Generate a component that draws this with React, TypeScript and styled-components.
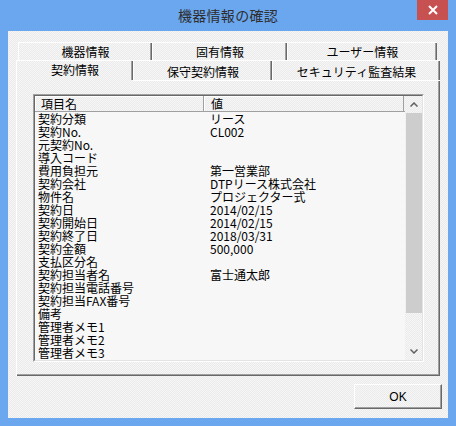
import styled, { createGlobalStyle, css } from "styled-components";

const GlobalStyle = createGlobalStyle`
  html, body {
    margin: 0;
    padding: 0;
  }
  body {
    font-family: "Noto Sans CJK JP", "Noto Sans", sans-serif;
    font-size: 12px;
    color: #000;
  }
`;

const dither = css`
  background-color: #f0f0f0;
  background-image: repeating-conic-gradient(#f6f6f6 0 25%, #ebebeb 0 50%);
  background-size: 2px 2px;
`;

const Window = styled.div`
  width: 456px;
  height: 426px;
  box-sizing: border-box;
  padding: 0 8px 8px;
  background: #6ba7ef;
  display: flex;
  flex-direction: column;
  overflow: hidden;
`;

const TitleBar = styled.div`
  height: 31px;
  display: grid;
  grid-template-columns: 1fr auto 1fr;
  align-items: start;
`;

const Title = styled.div`
  grid-column: 2;
  line-height: 30px;
  font-size: 14px;
  letter-spacing: 0.3px;
  color: #2e2e2e;
`;

const CloseButton = styled.div`
  grid-column: 3;
  justify-self: end;
  width: 31px;
  height: 20px;
  background: #c75050;
  display: flex;
  align-items: center;
  justify-content: center;
`;

const Client = styled.div`
  flex: 1;
  ${dither};
  display: flex;
  flex-direction: column;
  padding: 11px 6px 9px 8px;
`;

const TabControl = styled.div`
  height: 334px;
  margin-right: 2px;
  display: flex;
  flex-direction: column;
`;

const BackRow = styled.div`
  height: 18px;
  display: flex;
  padding-left: 2px;
`;

const FrontRow = styled.div`
  height: 21px;
  display: flex;
`;

const Tab = styled.div<{ $w: number }>`
  width: ${(p) => p.$w}px;
  box-sizing: border-box;
  border-top: 1px solid #fff;
  border-left: 1px solid #fff;
  box-shadow: inset -1px 0 #696969, inset -2px 0 #a0a0a0;
  display: flex;
  align-items: center;
  justify-content: center;
  line-height: 13px;
`;

const FrontTab = styled(Tab)<{ $active?: boolean }>`
  border-bottom: 1px solid ${(p) => (p.$active ? "transparent" : "#fff")};
  padding: ${(p) => (p.$active ? "0 0 3px" : "2px 0 0")};
`;

const Panel = styled.div`
  flex: 1;
  border-left: 1px solid #fff;
  box-shadow: inset -1px -1px #696969, inset -2px -2px #a0a0a0;
  padding: 13px 16px 14px 16px;
  display: flex;
`;

const ListFrame = styled.div`
  flex: 1;
  border: 1px solid;
  border-color: #a0a0a0 #fff #fff #a0a0a0;
  display: flex;
`;

const ListView = styled.div`
  flex: 1;
  border: 1px solid;
  border-color: #696969 #e3e3e3 #e3e3e3 #696969;
  background: #f7f7f7;
  display: grid;
  grid-template-columns: 1fr 17px;
`;

const Content = styled.div`
  display: flex;
  flex-direction: column;
`;

const HeaderRow = styled.div`
  height: 16px;
  box-sizing: border-box;
  display: grid;
  grid-template-columns: 169px 200px 1fr;
  border-bottom: 1px solid #a0a0a0;
  ${dither};
`;

const HeaderCell = styled.div<{ $pad: number }>`
  box-sizing: border-box;
  padding-left: ${(p) => p.$pad}px;
  border-right: 1px solid #a0a0a0;
  box-shadow: inset 1px 1px #fff;
  line-height: 15px;
  white-space: nowrap;
`;

const Row = styled.div`
  height: 13px;
  display: grid;
  grid-template-columns: 169px 200px;
  line-height: 13px;
  white-space: nowrap;
`;

const Cell = styled.div<{ $pad: number }>`
  padding-left: ${(p) => p.$pad}px;
`;

const ScrollBar = styled.div`
  ${dither};
  display: flex;
  flex-direction: column;
`;

const ArrowButton = styled.div`
  height: 17px;
  display: flex;
  align-items: center;
  justify-content: center;
`;

const Thumb = styled.div`
  height: 200px;
  margin-left: 1px;
  background: #cdcdcd;
`;

const Track = styled.div`
  flex: 1;
`;

const Footer = styled.div`
  margin-top: 8px;
  display: flex;
  justify-content: flex-end;
`;

const OkButton = styled.div`
  width: 88px;
  height: 25px;
  box-sizing: border-box;
  ${dither};
  border: 1px solid;
  border-color: #fff #696969 #696969 #fff;
  box-shadow: inset -1px -1px #a0a0a0;
  display: flex;
  align-items: center;
  justify-content: center;
  font-family: "Liberation Sans", Arial, sans-serif;
  font-size: 12px;
`;

const rows: [string, string][] = [
  ["契約分類", "リース"],
  ["契約No.", "CL002"],
  ["元契約No.", ""],
  ["導入コード", ""],
  ["費用負担元", "第一営業部"],
  ["契約会社", "DTPリース株式会社"],
  ["物件名", "プロジェクター式"],
  ["契約日", "2014/02/15"],
  ["契約開始日", "2014/02/15"],
  ["契約終了日", "2018/03/31"],
  ["契約金額", "500,000"],
  ["支払区分名", ""],
  ["契約担当者名", "富士通太郎"],
  ["契約担当電話番号", ""],
  ["契約担当FAX番号", ""],
  ["備考", ""],
  ["管理者メモ1", ""],
  ["管理者メモ2", ""],
  ["管理者メモ3", ""],
];

const Chevron = ({ up }: { up?: boolean }) => (
  <svg width="8" height="5" viewBox="0 0 8 5">
    <polyline
      points={up ? "0.5,4.5 4,1 7.5,4.5" : "0.5,0.5 4,4 7.5,0.5"}
      fill="none"
      stroke="#606060"
      strokeWidth="1.5"
    />
  </svg>
);

const App = () => {
  return (
    <>
      <GlobalStyle />
      <Window>
        <TitleBar>
          <Title>機器情報の確認</Title>
          <CloseButton>
            <svg width="10" height="10" viewBox="0 0 10 10">
              <path d="M1 1 L9 9 M9 1 L1 9" stroke="#fff" strokeWidth="2" />
            </svg>
          </CloseButton>
        </TitleBar>
        <Client>
          <TabControl>
            <BackRow>
              <Tab $w={134}>機器情報</Tab>
              <Tab $w={135}>固有情報</Tab>
              <Tab $w={150}>ユーザー情報</Tab>
            </BackRow>
            <FrontRow>
              <FrontTab $w={117} $active>
                契約情報
              </FrontTab>
              <FrontTab $w={139}>保守契約情報</FrontTab>
              <FrontTab $w={168}>セキュリティ監査結果</FrontTab>
            </FrontRow>
            <Panel>
              <ListFrame>
                <ListView>
                  <Content>
                    <HeaderRow>
                      <HeaderCell $pad={6}>項目名</HeaderCell>
                      <HeaderCell $pad={7}>値</HeaderCell>
                      <div />
                    </HeaderRow>
                    {rows.map(([name, value]) => (
                      <Row key={name}>
                        <Cell $pad={3}>{name}</Cell>
                        <Cell $pad={6}>{value}</Cell>
                      </Row>
                    ))}
                  </Content>
                  <ScrollBar>
                    <ArrowButton>
                      <Chevron up />
                    </ArrowButton>
                    <Thumb />
                    <Track />
                    <ArrowButton>
                      <Chevron />
                    </ArrowButton>
                  </ScrollBar>
                </ListView>
              </ListFrame>
            </Panel>
          </TabControl>
          <Footer>
            <OkButton>OK</OkButton>
          </Footer>
        </Client>
      </Window>
    </>
  );
};

export default App;
